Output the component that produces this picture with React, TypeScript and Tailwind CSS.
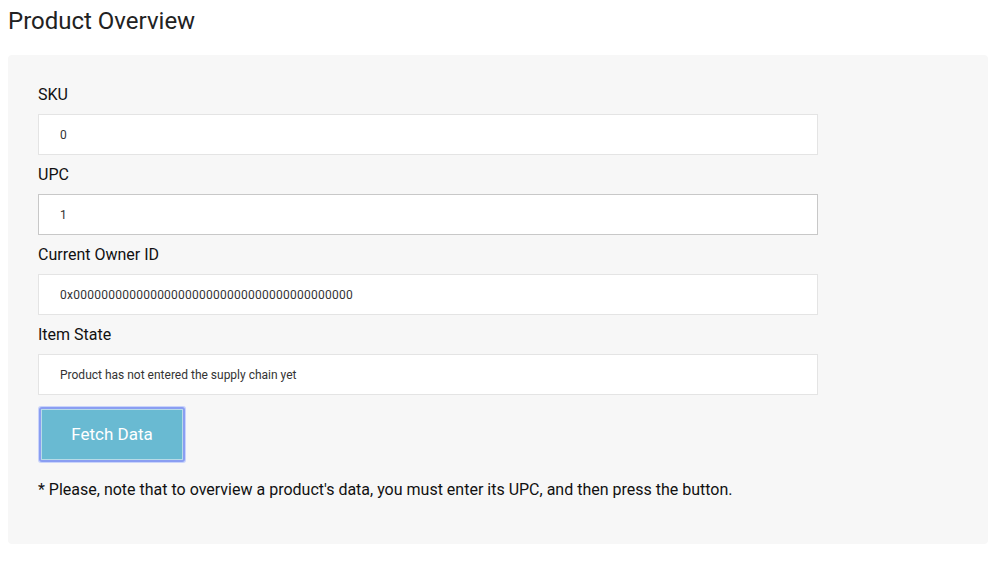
import React from "react";

const Field = ({ label, value, dark, wide }: { label: string; value: string; dark?: boolean; wide?: boolean }) => (
  <div className="flex flex-col">
    <div className="pt-[10px] pb-[9px] text-[16px] leading-[20px] text-[#111]">{label}</div>
    <div
      className={`w-[780px] h-[41px] bg-white border flex items-center pl-[21px] text-[12px] text-[#333] ${
        dark ? "border-[#c8c8c8]" : "border-[#e4e4e4]"
      } ${wide ? "tracking-[0.25px]" : ""}`}
    >
      {value}
    </div>
  </div>
);

export default function App() {
  return (
    <div className="w-[1005px] min-h-[562px] bg-white px-[8px]" style={{ fontFamily: "Roboto, 'Liberation Sans', sans-serif" }}>
      <h1 className="text-[24px] leading-[28px] pt-[7px] text-[#222] h-[55px] m-0 font-normal">Product Overview</h1>
      <div className="w-[980px] h-[489px] bg-[#f7f7f7] rounded-[4px] px-[30px] pt-[20px]">
        <Field label="SKU" value="0" />
        <Field label="UPC" value="1" dark />
        <Field label="Current Owner ID" value="0x0000000000000000000000000000000000000000" wide />
        <Field label="Item State" value="Product has not entered the supply chain yet" />
        <div className="mt-[11px] w-[148px] h-[57px] rounded-[3px] p-[1px] bg-[#c9d3fb]">
          <div className="w-full h-full rounded-[3px] border-[2px] border-[#8a9ef2]">
            <div className="w-full h-full bg-[#69bad2] border border-[#b7dbe8] flex items-center justify-center text-white text-[17px]">
              Fetch Data
            </div>
          </div>
        </div>
        <p className="mt-[17px] text-[16px] leading-[20px] text-[#111]">
          * Please, note that to overview a product's data, you must enter its UPC, and then press the button.
        </p>
      </div>
    </div>
  );
}
